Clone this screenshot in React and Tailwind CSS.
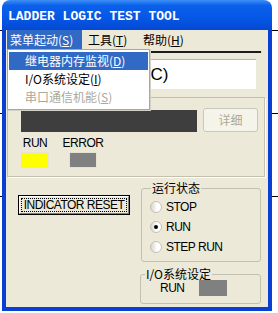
import React from "react";

const ui = "font-['Liberation_Sans','Noto_Sans_CJK_SC',sans-serif]";
const cjk = "font-['Noto_Sans_CJK_SC','Liberation_Sans',sans-serif]";

const Acc = ({ text, k }) => (
  <span>
    {text}(<span className="underline underline-offset-1">{k}</span>)
  </span>
);

const Radio = ({ label, checked }) => (
  <div className="h-[20px] flex items-center gap-[4px]">
    <div className="w-[12px] h-[12px] rounded-full border border-[#c4c2b8] bg-[linear-gradient(90deg,#d6d5cc,#ffffff_60%)] flex items-center justify-center">
      {checked && <div className="w-[4px] h-[4px] rounded-full bg-black" />}
    </div>
    <span className="text-[12px] leading-[14px] tracking-[-0.5px] text-black">{label}</span>
  </div>
);

export default function App() {
  return (
    <div className={`relative w-[278px] h-[313px] bg-white overflow-hidden ${ui}`}>
      {/* table lines of the page behind the window */}
      <div className="absolute left-0 right-0 top-[30px] h-px bg-black" />
      <div className="absolute left-0 right-0 top-[113px] h-px bg-black" />
      <div className="absolute left-0 right-0 top-[196px] h-px bg-black" />

      <div className="relative ml-[2px] w-[270px] h-[311px] flex flex-col">
        {/* Title bar */}
        <div className="h-[30px] rounded-t-[8px] bg-[linear-gradient(180deg,#3d8ef7_0%,#0b61ea_18%,#0557e6_60%,#0448d2_100%)] flex items-center pl-[6px]">
          <span className="font-['Liberation_Mono',monospace] font-bold text-[13px] text-white leading-none mt-[3px]">
            LADDER LOGIC TEST TOOL
          </span>
        </div>

        {/* Body */}
        <div className="flex-1 border-x-[4px] border-b-[4px] border-[#0a3fd4] bg-[#ece9d8] flex flex-col">
          {/* Menu bar */}
          <div className={`h-[20px] flex text-[12px] leading-[20px] ${cjk}`}>
            <div className="ml-[1px] w-[75px] pl-[3px] bg-[#316ac5] text-white">
              <Acc text="菜单起动" k="S" />
            </div>
            <div className="w-[55px] pl-[6px] text-black">
              <Acc text="工具" k="T" />
            </div>
            <div className="w-[55px] pl-[6px] text-black">
              <Acc text="帮助" k="H" />
            </div>
          </div>

          <div className="mt-[1px] ml-[1px] w-[255px] h-[2px] bg-[#1c1c1c] border-r border-[#d8d5c6]" />

          {/* Text field */}
          <div className="mt-[6px] ml-[14px] w-[236px] h-[30px] bg-white border-t border-[#b8b5a6] flex items-center pl-[104px]">
            <span className="text-[17px] text-black">(PLC)</span>
          </div>

          {/* Monitor group */}
          <div className="mt-[8px] ml-[1px] w-[258px] h-[80px] border border-[#c3c0b0] shadow-[1px_1px_0_#ffffff] pt-[10px] pl-[13px]">
            <div className="flex items-end gap-[6px]">
              <div className="w-[176px] h-[22px] bg-[#3e3e3e]" />
              <div className="w-[55px] h-[24px] rounded-[3px] border border-[#c9c7ba] bg-[#f5f4ea] flex items-center justify-center">
                <span className={`text-[12px] text-[#aca899] ${cjk}`}>详细</span>
              </div>
            </div>
            <div className="mt-[4px] flex gap-[20px]">
              <div className="w-[28px] flex flex-col items-center">
                <span className="text-[12px] leading-[14px] tracking-[-0.5px] whitespace-nowrap">RUN</span>
                <div className="mt-[2px] w-[28px] h-[16px] bg-[#ffff00] border border-[#e4e2d4]" />
              </div>
              <div className="w-[28px] flex flex-col items-center">
                <span className="text-[12px] leading-[14px] tracking-[-0.5px] whitespace-nowrap">ERROR</span>
                <div className="mt-[2px] w-[28px] h-[16px] bg-[#808080] border border-[#e4e2d4]" />
              </div>
            </div>
          </div>

          {/* Bottom section */}
          <div className="flex">
            <div className="ml-[12px] mt-[18px] w-[112px] h-[20px] border border-black">
              <div className="w-full h-full border border-t-white border-l-white border-r-[#808080] border-b-[#808080] bg-[#ece9d8] p-[1px]">
                <div className="w-full h-full border border-dotted border-black flex items-center justify-center">
                  <span className="text-[12px] leading-none tracking-[-0.5px] text-black">INDICATOR RESET</span>
                </div>
              </div>
            </div>

            <div className="ml-[10px] mt-[4px] flex flex-col">
              <fieldset className="ml-[1px] w-[120px] h-[81px] border border-[#c3c0b0] rounded-[3px] px-[8px]">
                <legend className={`ml-[1px] px-[1px] text-[12px] leading-[14px] ${cjk}`}>运行状态</legend>
                <div className="mt-[2px]">
                  <Radio label="STOP" />
                  <Radio label="RUN" checked />
                  <Radio label="STEP RUN" />
                </div>
              </fieldset>

              <fieldset className="mt-[5px] w-[121px] h-[37px] border border-[#c3c0b0] rounded-[3px] pl-[19px]">
                <legend className={`-ml-[15px] px-[1px] text-[12px] leading-[14px] ${cjk}`}>I/O系统设定</legend>
                <div className="-mt-[1px] flex items-center gap-[14px]">
                  <span className="text-[12px] leading-[14px] tracking-[-0.5px]">RUN</span>
                  <div className="w-[28px] h-[16px] bg-[#808080]" />
                </div>
              </fieldset>
            </div>
          </div>
        </div>

        {/* Open dropdown menu */}
        <div className={`absolute left-[5px] top-[49px] w-[143px] h-[61px] bg-white border border-[#aca899] shadow-[1px_1px_0_#d4d0c8] pt-[2px] px-[1px] text-[12px] leading-[18px] ${cjk}`}>
          <div className="h-[18px] pl-[16px] bg-[#316ac5] text-white">
            <Acc text="继电器内存监视" k="D" />
          </div>
          <div className="h-[18px] pl-[16px] text-black">
            <Acc text="I/O系统设定" k="I" />
          </div>
          <div className="h-[18px] pl-[16px] text-[#aca899]">
            <Acc text="串口通信机能" k="S" />
          </div>
        </div>
      </div>
    </div>
  );
}
